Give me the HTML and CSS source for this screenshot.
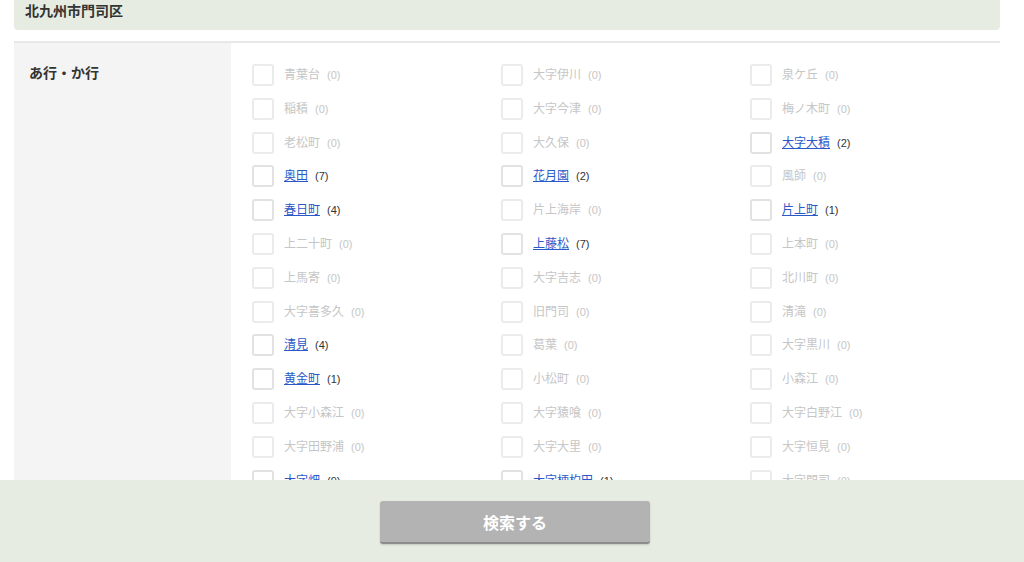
FILE: index.html
```html
<!DOCTYPE html>
<html lang="ja">
<head>
<meta charset="utf-8">
<title>北九州市門司区</title>
<link rel="stylesheet" href="styles.css">
</head>
<body>
<div class="page">
  <div class="area-head">北九州市門司区</div>
  <div class="section">
    <div class="section-label">あ行・か行</div>
    <div class="town-grid">
      <label class="town off"><span class="box"></span><span class="name">青葉台</span><span class="count">(0)</span></label>
      <label class="town off"><span class="box"></span><span class="name">大字伊川</span><span class="count">(0)</span></label>
      <label class="town off"><span class="box"></span><span class="name">泉ケ丘</span><span class="count">(0)</span></label>

      <label class="town off"><span class="box"></span><span class="name">稲積</span><span class="count">(0)</span></label>
      <label class="town off"><span class="box"></span><span class="name">大字今津</span><span class="count">(0)</span></label>
      <label class="town off"><span class="box"></span><span class="name">梅ノ木町</span><span class="count">(0)</span></label>

      <label class="town off"><span class="box"></span><span class="name">老松町</span><span class="count">(0)</span></label>
      <label class="town off"><span class="box"></span><span class="name">大久保</span><span class="count">(0)</span></label>
      <label class="town on"><span class="box"></span><a class="name" href="#">大字大積</a><span class="count">(2)</span></label>

      <label class="town on"><span class="box"></span><a class="name" href="#">奥田</a><span class="count">(7)</span></label>
      <label class="town on"><span class="box"></span><a class="name" href="#">花月園</a><span class="count">(2)</span></label>
      <label class="town off"><span class="box"></span><span class="name">風師</span><span class="count">(0)</span></label>

      <label class="town on"><span class="box"></span><a class="name" href="#">春日町</a><span class="count">(4)</span></label>
      <label class="town off"><span class="box"></span><span class="name">片上海岸</span><span class="count">(0)</span></label>
      <label class="town on"><span class="box"></span><a class="name" href="#">片上町</a><span class="count">(1)</span></label>

      <label class="town off"><span class="box"></span><span class="name">上二十町</span><span class="count">(0)</span></label>
      <label class="town on"><span class="box"></span><a class="name" href="#">上藤松</a><span class="count">(7)</span></label>
      <label class="town off"><span class="box"></span><span class="name">上本町</span><span class="count">(0)</span></label>

      <label class="town off"><span class="box"></span><span class="name">上馬寄</span><span class="count">(0)</span></label>
      <label class="town off"><span class="box"></span><span class="name">大字吉志</span><span class="count">(0)</span></label>
      <label class="town off"><span class="box"></span><span class="name">北川町</span><span class="count">(0)</span></label>

      <label class="town off"><span class="box"></span><span class="name">大字喜多久</span><span class="count">(0)</span></label>
      <label class="town off"><span class="box"></span><span class="name">旧門司</span><span class="count">(0)</span></label>
      <label class="town off"><span class="box"></span><span class="name">清滝</span><span class="count">(0)</span></label>

      <label class="town on"><span class="box"></span><a class="name" href="#">清見</a><span class="count">(4)</span></label>
      <label class="town off"><span class="box"></span><span class="name">葛葉</span><span class="count">(0)</span></label>
      <label class="town off"><span class="box"></span><span class="name">大字黒川</span><span class="count">(0)</span></label>

      <label class="town on"><span class="box"></span><a class="name" href="#">黄金町</a><span class="count">(1)</span></label>
      <label class="town off"><span class="box"></span><span class="name">小松町</span><span class="count">(0)</span></label>
      <label class="town off"><span class="box"></span><span class="name">小森江</span><span class="count">(0)</span></label>

      <label class="town off"><span class="box"></span><span class="name">大字小森江</span><span class="count">(0)</span></label>
      <label class="town off"><span class="box"></span><span class="name">大字猿喰</span><span class="count">(0)</span></label>
      <label class="town off"><span class="box"></span><span class="name">大字白野江</span><span class="count">(0)</span></label>

      <label class="town off"><span class="box"></span><span class="name">大字田野浦</span><span class="count">(0)</span></label>
      <label class="town off"><span class="box"></span><span class="name">大字大里</span><span class="count">(0)</span></label>
      <label class="town off"><span class="box"></span><span class="name">大字恒見</span><span class="count">(0)</span></label>

      <label class="town on"><span class="box"></span><a class="name" href="#">大字畑</a><span class="count">(9)</span></label>
      <label class="town on"><span class="box"></span><a class="name" href="#">大字柄杓田</a><span class="count">(1)</span></label>
      <label class="town off"><span class="box"></span><span class="name">大字門司</span><span class="count">(0)</span></label>
    </div>
  </div>
</div>
<div class="search-bar">
  <button class="search-btn" type="button">検索する</button>
</div>
</body>
</html>
```

FILE: styles.css
```css
html, body {
  margin: 0;
  padding: 0;
  background: #ffffff;
  font-family: "Liberation Sans", "Noto Sans CJK JP", sans-serif;
  color: #333333;
  overflow: hidden;
}

.page {
  width: 986px;
  margin-left: 14px;
}

.area-head {
  background: #e6ece1;
  border-radius: 0 0 4px 4px;
  padding: 3px 11px 11px;
  line-height: 16px;
  font-size: 14px;
  font-weight: bold;
  color: #333333;
}

.section {
  margin-top: 11px;
  border-top: 2px solid #e8e8e8;
  display: flex;
}

.section-label {
  width: 202px;
  flex: none;
  background: #f4f4f4;
  padding: 19px 0 0 15px;
  font-size: 14px;
  font-weight: bold;
  line-height: 22px;
  color: #333333;
}

.town-grid {
  flex: 1;
  display: grid;
  grid-template-columns: repeat(3, 249px);
  row-gap: 11.8px;
  padding: 21px 0 20px 21px;
}

.town {
  display: flex;
  align-items: center;
  height: 22px;
  font-size: 12px;
  white-space: nowrap;
}

.box {
  width: 18px;
  height: 18px;
  border: 2px solid #ebebeb;
  border-radius: 3px;
  background: #ffffff;
  margin-right: 10px;
  flex: none;
}

.town.on .box {
  border-color: #e2e2e2;
}

.name {
  line-height: 16px;
}

.town.off .name {
  color: #c6c6c6;
}

.town.on .name {
  color: #2b58c8;
  text-decoration: underline;
}

.count {
  font-size: 11px;
  margin-left: 7px;
}

.town.off .count {
  color: #c6c6c6;
}

.town.on .count {
  color: #333333;
}

.search-bar {
  position: fixed;
  left: 0;
  right: 0;
  bottom: 0;
  height: 61px;
  padding: 21px 0 0 6px;
  background: #e6ece1;
  display: flex;
  justify-content: center;
  align-items: flex-start;
}

.search-btn {
  width: 270px;
  height: 43px;
  border: none;
  border-bottom: 2px solid #8c8c8c;
  border-radius: 3px;
  background: #b3b3b3;
  color: #ffffff;
  font-family: "Noto Sans CJK JP", sans-serif;
  font-size: 16px;
  font-weight: bold;
  box-shadow: 0 1px 2px rgba(0, 0, 0, 0.15);
  padding: 0;
}
```
